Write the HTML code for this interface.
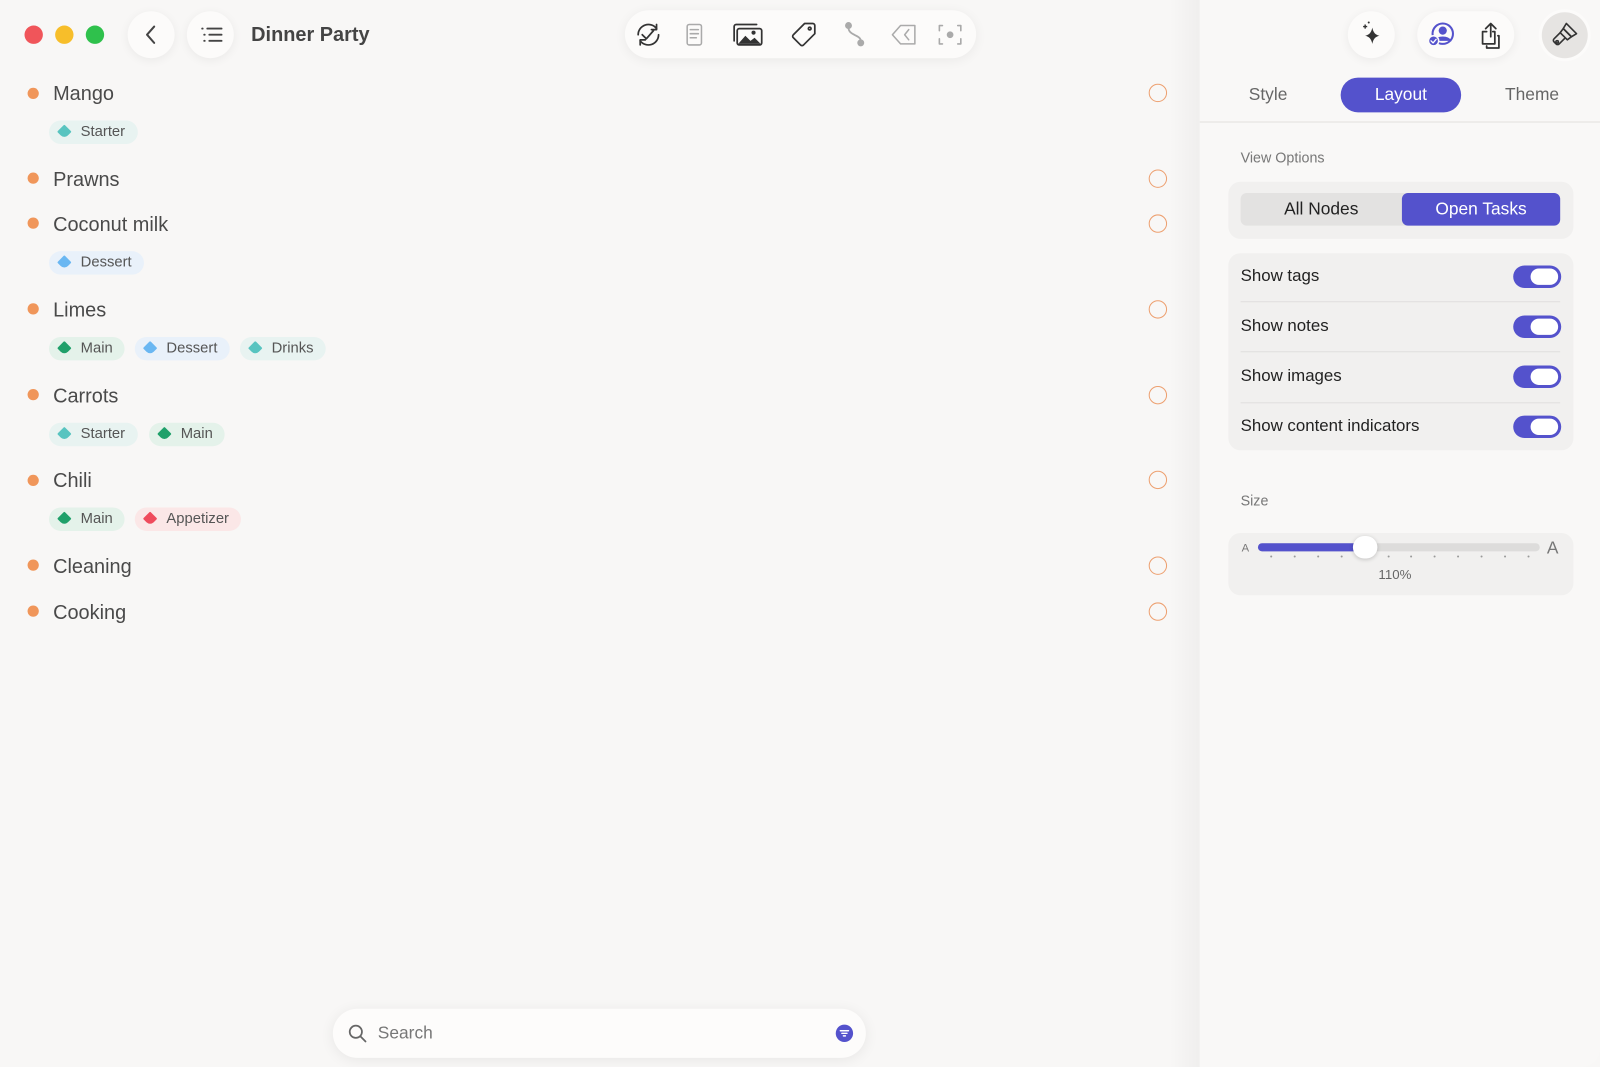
<!DOCTYPE html>
<html><head><meta charset="utf-8"><style>
*{margin:0;padding:0;box-sizing:border-box}
html,body{width:1600px;height:1067px;overflow:hidden;background:#f8f7f6}
body{font-family:"Liberation Sans",sans-serif;color:#333}
#w{position:absolute;left:0;top:0;width:1567px;height:1045px;transform:scale(1.02106);transform-origin:0 0;background:#f8f7f6}
.a{position:absolute}
.tl{width:18px;height:18px;border-radius:50%;top:25px}
.cbtn{position:absolute;width:46px;height:46px;border-radius:50%;background:#fcfbfa;box-shadow:0 2px 10px rgba(0,0,0,.06)}
.dot{position:absolute;left:27px;width:11px;height:11px;border-radius:50%;background:#f0965a}
.ttl{position:absolute;left:52px;font-size:19.5px;color:#4a4a4a;white-space:nowrap;letter-spacing:0}
.chk{position:absolute;left:1125px;width:18px;height:18px;border-radius:50%;border:1.6px solid #eda070}
.tag{position:absolute;height:23px;border-radius:12px;font-size:14.5px;color:#555;padding:0 12px 0 31px;line-height:23px;white-space:nowrap}
.tag i{position:absolute;left:10px;top:6px;width:10px;height:10px;border-radius:1px 1px 5px 1px;transform:rotate(45deg)}
.teal{background:#e8f3f1}.teal i{background:#58c4c0}
.green{background:#e4f2ea}.green i{background:#1fa06a}
.blue{background:#e9f1fa}.blue i{background:#6ab7f2}
.red{background:#fbe7e7}.red i{background:#ef4b5c}
.card{position:absolute;left:1203px;width:338px;background:#f1f0ef;border-radius:12px}
.lbl{position:absolute;font-size:16.5px;color:#222}
.tog{position:absolute;left:1482px;width:47px;height:22px;border-radius:11px;background:#5452cc}
.tog::after{content:"";position:absolute;right:3px;top:3px;width:27px;height:16px;border-radius:8px;background:#fff}
.div{position:absolute;left:1215px;width:313px;height:1px;background:#e0dfde}
</style></head><body><div id="w">
<div class="a tl" style="left:24px;background:#f0555a"></div>
<div class="a tl" style="left:54px;background:#f7be2a"></div>
<div class="a tl" style="left:84px;background:#2fc14c"></div>
<div class="cbtn" style="left:125px;top:11px"><svg width="46" height="46"><path d="M26 15 L19 23 L26 31" fill="none" stroke="#444" stroke-width="2" stroke-linecap="round" stroke-linejoin="round"/></svg></div>
<div class="cbtn" style="left:183px;top:11px"><svg width="46" height="46"><g stroke="#444" stroke-width="1.8" stroke-linecap="round"><path d="M15 17h.5M17 23h.5M17 29h.5M20 17h14M22 23h12M22 29h12"/></g></svg></div>
<div class="a" style="left:246px;top:23px;font-size:19.5px;font-weight:bold;color:#444">Dinner Party</div>
<div class="a" style="left:612px;top:10px;width:344px;height:47px;border-radius:24px;background:#fcfbfa;box-shadow:0 2px 12px rgba(0,0,0,.06)">
<svg width="344" height="47" fill="none" stroke-linecap="round" stroke-linejoin="round">
<g stroke="#333" stroke-width="1.7"><path d="M13 24a10 10 0 0 1 18-6M33 24a10 10 0 0 1-18 6"/><path d="M31 14v5h-5M15 34v-5h5"/><path d="M17 24l4 4 7-8"/></g>
<g stroke="#aaa" stroke-width="1.5"><rect x="61" y="14" width="14" height="20" rx="2"/><path d="M64 19h8M64 23h8M64 27h6"/></g>
<g stroke="#333" stroke-width="1.7"><rect x="110" y="18" width="24" height="16" rx="2"/><path d="M107 30V16a2 2 0 0 1 2-2h20"/></g><path d="M111 33l7-8 5 5 4-3 6 6z" fill="#333"/><circle cx="126" cy="22" r="2" fill="#333"/>
<g stroke="#333" stroke-width="1.7"><path d="M176 13h8a2 2 0 0 1 2 2v8l-11 11a2 2 0 0 1-3 0l-7-7a2 2 0 0 1 0-3z"/><circle cx="181" cy="18" r="1.3"/></g>
<g stroke="#aaa" stroke-width="1.8"><circle cx="219" cy="15" r="2.5" fill="#aaa"/><circle cx="231" cy="32" r="2.5" fill="#aaa"/><path d="M219 17c0 8 12 7 12 13"/></g>
<g stroke="#aaa" stroke-width="1.5"><path d="M262 24l8-9h14v18h-14z"/><path d="M278 19l-4 5 4 5"/></g>
<g stroke="#aaa" stroke-width="1.6"><path d="M311 15h-3v5M326 15h3v5M311 33h-3v-5M326 33h3v-5"/><circle cx="318.5" cy="24" r="2.5" fill="#aaa"/></g>
</svg></div>
<div class="dot" style="top:86px"></div><div class="ttl" style="top:81px">Mango</div><div class="chk" style="top:82px"></div>
<div class="tag teal" style="left:48px;top:118px"><i></i>Starter</div>
<div class="dot" style="top:169px"></div><div class="ttl" style="top:165px">Prawns</div><div class="chk" style="top:166px"></div>
<div class="dot" style="top:213px"></div><div class="ttl" style="top:209px">Coconut milk</div><div class="chk" style="top:210px"></div>
<div class="tag blue" style="left:48px;top:246px"><i></i>Dessert</div>
<div class="dot" style="top:297px"></div><div class="ttl" style="top:293px">Limes</div><div class="chk" style="top:294px"></div>
<div class="tag green" style="left:48px;top:330px"><i></i>Main</div>
<div class="tag blue" style="left:132px;top:330px"><i></i>Dessert</div>
<div class="tag teal" style="left:235px;top:330px"><i></i>Drinks</div>
<div class="dot" style="top:381px"></div><div class="ttl" style="top:377px">Carrots</div><div class="chk" style="top:378px"></div>
<div class="tag teal" style="left:48px;top:414px"><i></i>Starter</div>
<div class="tag green" style="left:146px;top:414px"><i></i>Main</div>
<div class="dot" style="top:465px"></div><div class="ttl" style="top:460px">Chili</div><div class="chk" style="top:461px"></div>
<div class="tag green" style="left:48px;top:497px"><i></i>Main</div>
<div class="tag red" style="left:132px;top:497px"><i></i>Appetizer</div>
<div class="dot" style="top:548px"></div><div class="ttl" style="top:544px">Cleaning</div><div class="chk" style="top:545px"></div>
<div class="dot" style="top:593px"></div><div class="ttl" style="top:589px">Cooking</div><div class="chk" style="top:590px"></div>
<div class="a" style="left:326px;top:988px;width:522px;height:48px;border-radius:24px;background:#fdfcfb;box-shadow:0 2px 14px rgba(0,0,0,.07)">
<svg class="a" style="left:14px;top:14px" width="20" height="20" fill="none" stroke="#666" stroke-width="1.7" stroke-linecap="round"><circle cx="8.5" cy="8.5" r="6"/><path d="M13 13l5 5"/></svg>
<div class="a" style="left:44px;top:14px;font-size:17px;color:#777">Search</div>
<svg class="a" style="left:492px;top:15px" width="18" height="18"><circle cx="9" cy="9" r="8.5" fill="#5452cc"/><path d="M5 6.5h8M6.5 9h5M8 11.5h2" stroke="#fff" stroke-width="1.4" stroke-linecap="round"/></svg></div>
<div class="a" style="left:1145px;top:0;width:30px;height:1045px;background:linear-gradient(90deg,rgba(0,0,0,0),rgba(0,0,0,.035))"></div>
<div class="a" style="left:1175px;top:0;width:392px;height:1045px;background:#f9f8f7;border-radius:0 0 18px 0"></div>
<div class="cbtn" style="left:1320px;top:11px"><svg width="46" height="46"><path d="M24 16c1 5 3 7 7 8-4 1-6 3-7 8-1-5-3-7-7-8 4-1 6-3 7-8z" fill="#333"/><path d="M17 13v4M15 15h4" stroke="#333" stroke-width="1.4"/><circle cx="20.5" cy="11" r="1" fill="#333"/></svg></div>
<div class="a" style="left:1388px;top:11px;width:95px;height:46px;border-radius:23px;background:#fcfbfa;box-shadow:0 2px 10px rgba(0,0,0,.06)">
<svg width="95" height="46" fill="none" stroke-linecap="round" stroke-linejoin="round"><circle cx="25" cy="22" r="10" stroke="#5452cc" stroke-width="2"/><circle cx="25" cy="19" r="4" fill="#5452cc"/><path d="M17 29c3-5 13-5 16 0" fill="#5452cc" stroke="#5452cc"/><circle cx="16" cy="29" r="5" fill="#5452cc" stroke="#fcfbfa" stroke-width="1.5"/><path d="M13.5 29l2 2 3-3.5" stroke="#fff" stroke-width="1.3"/>
<g stroke="#333" stroke-width="1.7"><path d="M67 17l5-5 5 5M72 12v13"/><path d="M68 20h-4v12h12v-12h-2"/><path d="M79 24h1v12h-12v-2"/></g></svg></div>
<div class="a" style="left:1510px;top:12px;width:45px;height:45px;border-radius:50%;background:#e6e4e2;box-shadow:0 0 0 3px #fcfbfa">
<svg width="45" height="45" fill="none" stroke="#333" stroke-width="1.6" stroke-linejoin="round"><path d="M24 11l10 10-5 3-8-8z"/><path d="M21 16l8 8-4 3-7-7z"/><path d="M18 20l-6 6a2 2 0 0 0 0 3l2 2a2 2 0 0 0 3 0l6-6"/><circle cx="15" cy="29" r="1.2"/></svg></div>
<div class="a" style="left:1223px;top:83px;font-size:17px;color:#666">Style</div>
<div class="a" style="left:1313px;top:76px;width:118px;height:34px;border-radius:17px;background:#5452cc;color:#fff;font-size:17px;text-align:center;line-height:34px">Layout</div>
<div class="a" style="left:1474px;top:83px;font-size:17px;color:#666">Theme</div>
<div class="a" style="left:1175px;top:119px;width:392px;height:1px;background:#e2e0de"></div>
<div class="a" style="left:1215px;top:146px;font-size:14px;color:#777">View Options</div>
<div class="card" style="top:178px;height:56px"></div>
<div class="a" style="left:1215px;top:189px;width:313px;height:32px;border-radius:6px;background:#e3e2e1"></div>
<div class="a" style="left:1215px;top:189px;width:158px;height:32px;text-align:center;line-height:32px;font-size:17px;color:#222">All Nodes</div>
<div class="a" style="left:1373px;top:189px;width:155px;height:32px;border-radius:6px;background:#5452cc;text-align:center;line-height:32px;font-size:17px;color:#fff">Open Tasks</div>
<div class="card" style="top:248px;height:193px"></div>
<div class="lbl" style="left:1215px;top:261px">Show tags</div><div class="tog" style="top:260px"></div>
<div class="div" style="top:295px"></div>
<div class="lbl" style="left:1215px;top:310px">Show notes</div><div class="tog" style="top:309px"></div>
<div class="div" style="top:344px"></div>
<div class="lbl" style="left:1215px;top:359px">Show images</div><div class="tog" style="top:358px"></div>
<div class="div" style="top:394px"></div>
<div class="lbl" style="left:1215px;top:408px">Show content indicators</div><div class="tog" style="top:407px"></div>
<div class="a" style="left:1215px;top:482px;font-size:14px;color:#777">Size</div>
<div class="card" style="top:522px;height:61px"></div>
<div class="a" style="left:1216px;top:531px;font-size:11px;color:#777">A</div>
<div class="a" style="left:1515px;top:527px;font-size:17px;color:#777">A</div>
<div class="a" style="left:1232px;top:532px;width:276px;height:8px;border-radius:4px;background:#dddcdb"></div>
<div class="a" style="left:1232px;top:532px;width:104px;height:8px;border-radius:4px;background:#5452cc"></div>
<svg class="a" style="left:1232px;top:543px" width="276" height="4"><g fill="#999"><circle cx="13" cy="2" r="1"/><circle cx="36" cy="2" r="1"/><circle cx="59" cy="2" r="1"/><circle cx="82" cy="2" r="1"/><circle cx="128" cy="2" r="1"/><circle cx="150" cy="2" r="1"/><circle cx="173" cy="2" r="1"/><circle cx="196" cy="2" r="1"/><circle cx="219" cy="2" r="1"/><circle cx="242" cy="2" r="1"/><circle cx="265" cy="2" r="1"/></g></svg>
<div class="a" style="left:1325px;top:525px;width:24px;height:22px;border-radius:11px;background:#fff;box-shadow:0 1px 4px rgba(0,0,0,.2)"></div>
<div class="a" style="left:1350px;top:555px;font-size:13px;color:#666">110%</div>
</div></body></html>
